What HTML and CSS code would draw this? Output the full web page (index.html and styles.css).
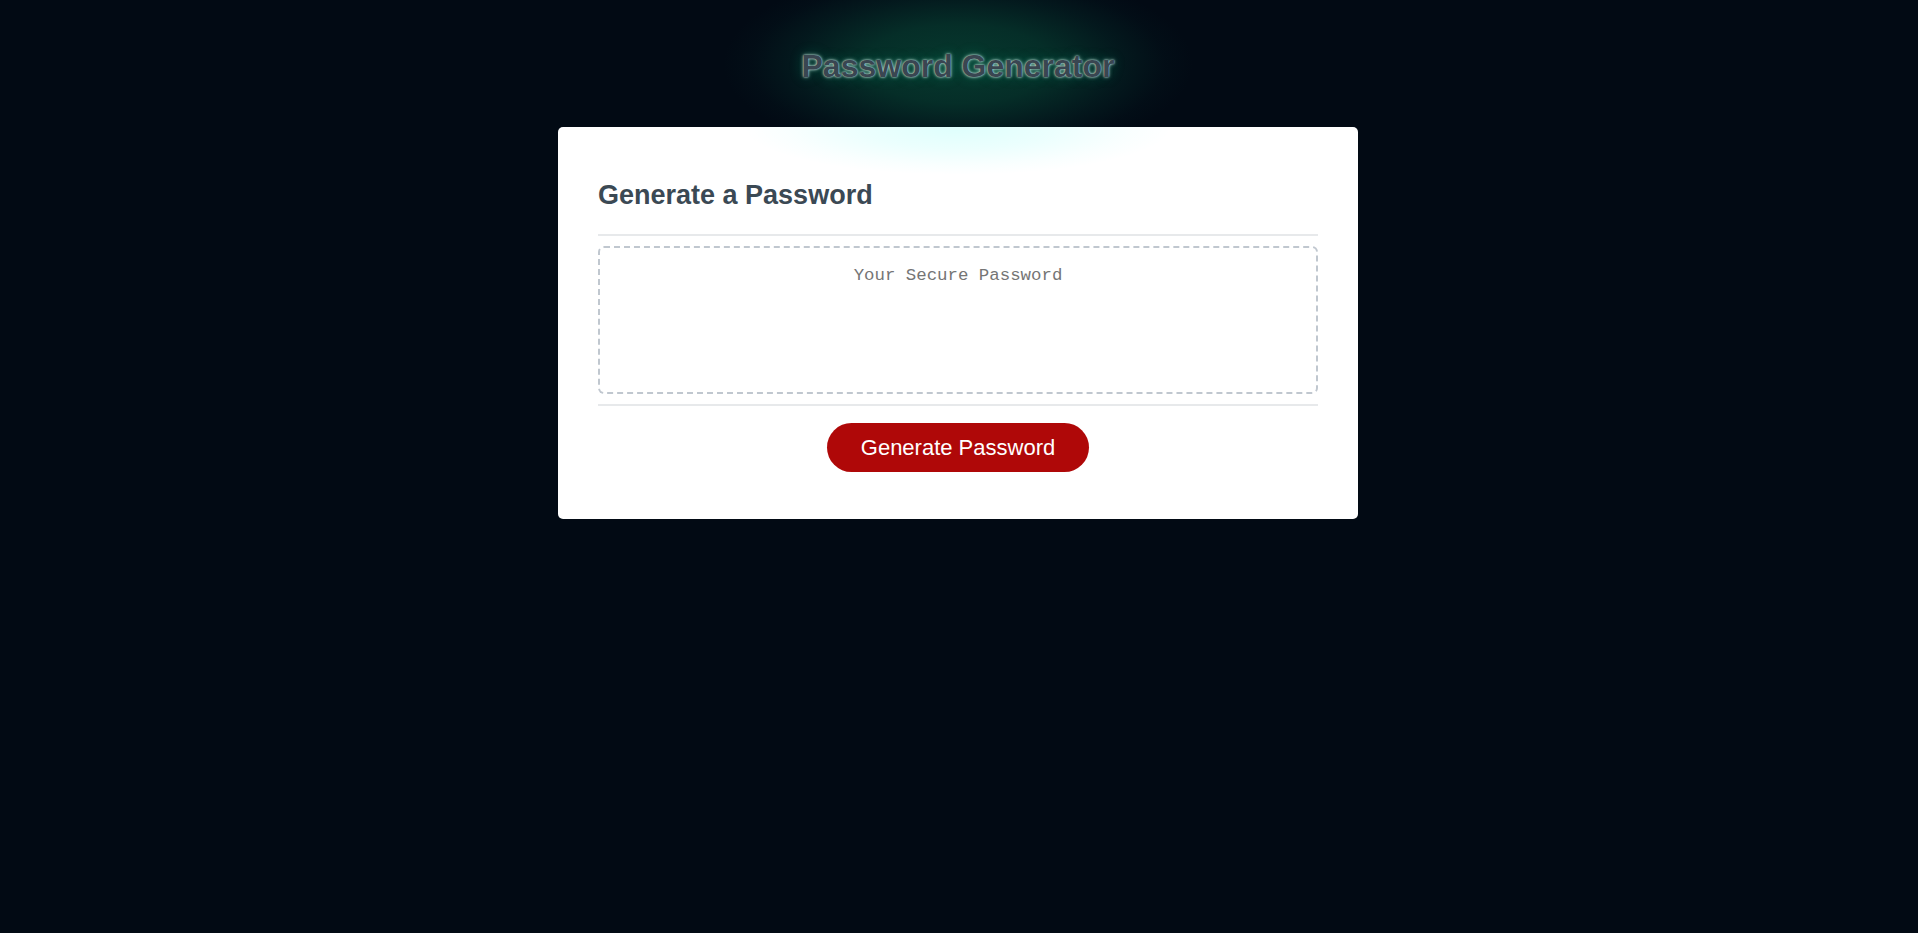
FILE: index.html
```html
<!DOCTYPE html>
<html lang="en">
<head>
<meta charset="UTF-8">
<title>Password Generator</title>
<link rel="stylesheet" href="styles.css">
</head>
<body>
<div class="wrapper">
  <header>
    <h1>Password Generator</h1>
  </header>
  <div class="card">
    <div class="card-header">
      <h2>Generate a Password</h2>
    </div>
    <div class="card-body">
      <textarea readonly id="password" placeholder="Your Secure Password" aria-label="Generated Password"></textarea>
    </div>
    <div class="card-footer">
      <button id="generate" class="btn">Generate Password</button>
    </div>
  </div>
</div>
</body>
</html>
```

FILE: styles.css
```css
*, *::before, *::after {
  box-sizing: border-box;
}

html, body {
  margin: 0;
  padding: 0;
  height: 100%;
  background-color: #020a14;
  font-family: "Liberation Sans", Arial, sans-serif;
}

.wrapper {
  padding-top: 27px;
  padding-left: 20px;
  padding-right: 22px;
  background: radial-gradient(ellipse 235px 98px at calc(50% - 1px) 64px,
    rgba(10, 100, 70, 0.52) 0%,
    rgba(10, 100, 70, 0.4) 40%,
    rgba(10, 90, 70, 0.18) 70%,
    rgba(10, 80, 70, 0.05) 88%,
    rgba(10, 80, 70, 0) 100%) no-repeat;
}

header {
  text-align: center;
  padding: 0 20px 20px;
}

header h1 {
  margin: 21px 0 22px;
  font-size: 32px;
  font-weight: bold;
  line-height: 37px;
  color: hsl(206, 17%, 27%);
  text-shadow:
    0 0 2px rgba(235, 255, 250, 0.95),
    0 0 4px rgba(200, 255, 240, 0.55),
    0 0 14px rgba(0, 200, 140, 0.3);
}

.card {
  background: radial-gradient(ellipse 215px 48px at 50% 0,
      rgba(0, 255, 235, 0.13) 0%,
      rgba(0, 255, 235, 0.08) 45%,
      rgba(0, 255, 235, 0.025) 80%,
      rgba(0, 255, 235, 0) 100%) no-repeat,
    #ffffff;
  border-radius: 5px;
  color: hsl(206, 17%, 28%);
  font-size: 18px;
  margin: 0 auto;
  width: 800px;
  padding: 30px 40px;
}

.card-header h2 {
  margin: 22.6px 0 23px;
  font-size: 27px;
  line-height: 31px;
  font-weight: bold;
}

.card-header::after {
  content: " ";
  display: block;
  width: 100%;
  height: 2px;
  background: #e7e9eb;
}

.card-body {
  min-height: 100px;
}

#password {
  appearance: none;
  -webkit-appearance: none;
  display: block;
  width: 100%;
  height: 148px;
  padding: 17px 15px 83px;
  margin: 10px 0;
  font-family: "Liberation Mono", "DejaVu Sans Mono", monospace;
  font-size: 17.4px;
  line-height: 22px;
  text-align: center;
  border: 2px dashed #c0c7cf;
  border-radius: 6px;
  resize: none;
  overflow: hidden;
  background: transparent;
  color: #333;
}

#password::placeholder {
  color: #757575;
}

.card-footer {
  text-align: center;
}

.card-footer::before {
  content: " ";
  display: block;
  width: 100%;
  height: 2px;
  background: #e7e9eb;
}

.btn {
  border: none;
  background-color: hsl(360, 91%, 36%);
  border-radius: 25px;
  color: #ffffff;
  display: inline-block;
  font-family: "Liberation Sans", Arial, sans-serif;
  font-size: 22px;
  line-height: 21px;
  margin: 17px 0 17px;
  padding: 14px 34px;
  text-align: center;
  cursor: pointer;
}
```
